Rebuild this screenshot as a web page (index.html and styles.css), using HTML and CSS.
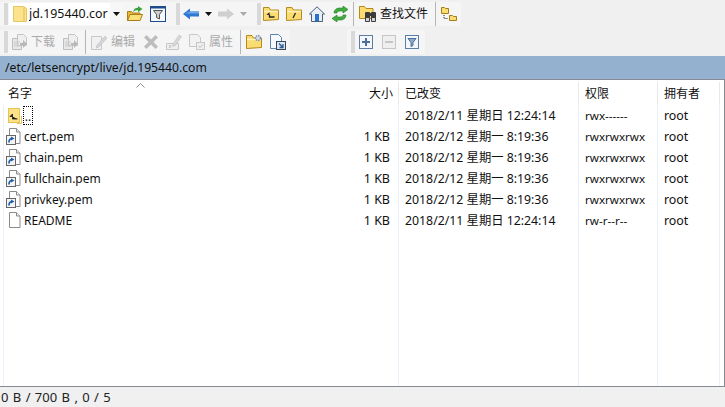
FILE: index.html
```html
<!DOCTYPE html>
<html lang="zh-CN">
<head>
<meta charset="utf-8">
<title>WinSCP</title>
<link rel="stylesheet" href="styles.css">
</head>
<body>
<svg class="defs" width="0" height="0">
  <symbol id="doc-link" viewBox="0 0 16 17">
    <path d="M3.500.5h7l3.500 3.500v11.500H3.500z" fill="#fff" stroke="#8a8a8a"/>
    <path d="M10.500.5v3.500h3.500" fill="#eee" stroke="#8a8a8a"/>
    <rect x=".5" y="7.500" width="9" height="9" fill="#f4f4f4" stroke="#666"/>
    <path d="M3 14.500c0-3 1-4 3-4" fill="none" stroke="#1f5fa8" stroke-width="1.700"/>
    <path d="M5 8.500l3.500 2-3.500 2z" fill="#1f5fa8"/>
  </symbol>
  <symbol id="doc-dl" viewBox="0 0 16 16">
    <path d="M1.500 4.500h9v11h-9z" fill="#e8e8e8" stroke="#bdbdbd"/>
    <path d="M6.500.5h6l3 3v8h-9z" fill="#efefef" stroke="#c4c4c4"/>
    <path d="M3 8h6M3 10h5M3 12h6" stroke="#c9c9c9"/>
    <path d="M9 9h3V6l4 4-4 4v-3H9z" fill="#b8b8b8"/>
  </symbol>
  <symbol id="folder" viewBox="0 0 16 16">
    <path d="M.5 14.500v-13h5.500l1.500 2.500h8v9.500z" fill="#fbdc72" stroke="#b48a1c"/>
    <path d="M1 5.500h14" stroke="#fff3b8" stroke-width="1.500"/>
  </symbol>
  <symbol id="grip" viewBox="0 0 4 22">
    <path d="M0 1h4M0 3h4M0 5h4M0 7h4M0 9h4M0 11h4M0 13h4M0 15h4M0 17h4M0 19h4M0 21h4" stroke="#bcbcbc"/>
  </symbol>
</svg>

<header class="toolbars">
  <div class="bar">
    <div class="group g-a">
      <svg class="grip"><use href="#grip"/></svg>
      <div class="combo">
        <svg class="ic14" viewBox="0 0 14 16"><path d="M.5.5h10l3 2v13H.5z" fill="#fce28d" stroke="#e6c766"/><path d="M11 1v14" stroke="#e8bd4b"/></svg>
        <span class="combo-text">jd.195440.cor</span>
        <span class="caret-box"><i class="caret"></i></span>
      </div>
      <svg class="ic ml4" viewBox="0 0 16 16"><path d="M.5 14.500v-9h4l1 1.500h7.500v7.500z" fill="#e9b93a" stroke="#a97f15"/><path d="M.5 14.500l2.500-6h12.500l-2.500 6z" fill="#fde07a" stroke="#a97f15"/><path d="M6 6c.5-3 3-4.500 5-4.200V0l4.500 3L11 6.200V4.300C9 4 7.500 4.700 6 6z" fill="#3ba33b"/></svg>
      <svg class="ic ml7" viewBox="0 0 16 16"><rect x=".5" y=".5" width="15" height="15" fill="#f4f7fb" stroke="#1c4a8a"/><path d="M1 1.500h14" stroke="#1c4a8a" stroke-width="2"/><path d="M3.500 4.500h9L9.500 8.500v4.500l-3-1.500v-3z" fill="#cfcfcf" stroke="#555"/></svg>
    </div>
    <div class="group g-b">
      <svg class="grip"><use href="#grip"/></svg>
      <svg class="ic ml3" viewBox="0 0 16 16"><path d="M0 8l7-5.500V5.500h9v5H7v3z" fill="#2f76d2"/><path d="M7 5.500h9v2H2z" fill="#6fa6e8"/></svg>
      <i class="caret ml6"></i>
      <svg class="ic ml6" viewBox="0 0 16 16"><path d="M16 8L9 2.500V5.500H0v5h9v3z" fill="#cfcfcf"/></svg>
      <i class="caret caret-off ml6"></i>
    </div>
    <div class="group g-c">
      <svg class="grip"><use href="#grip"/></svg>
      <svg class="ic ml2" viewBox="0 0 16 16"><use href="#folder"/><path d="M6.500 8.500v2.500h5" fill="none" stroke="#222" stroke-width="1.300"/><path d="M3.500 9l3-3v3z" fill="#222"/></svg>
      <svg class="ic ml7" viewBox="0 0 16 16"><use href="#folder"/><path d="M9.500 7l-2.500 5" stroke="#222" stroke-width="1.300"/></svg>
      <svg class="ic ml7" viewBox="0 0 16 16"><path d="M8 .8L.5 8h2v7.500h11V8h2z" fill="#e9eef5" stroke="#4a617e"/><rect x="6" y="8" width="4" height="7" fill="#2a73cc"/></svg>
      <svg class="ic ml7" viewBox="0 0 16 16"><path d="M2 7c0-3 2.500-5 5.500-5H11V0l5 3.500L11 7V5H8C6 5 5 6 5 7z" fill="#3fae3f" stroke="#237a23" stroke-width=".6"/><path d="M14 9c0 3-2.500 5-5.500 5H5v2l-5-3.500L5 9v2h3c2 0 3-1 3-2z" fill="#3fae3f" stroke="#237a23" stroke-width=".6"/></svg>
      <i class="sep"></i>
      <div class="find">
        <svg class="ic-find" viewBox="0 0 18 18"><path d="M.5 13.500v-12h5l1.500 2h7v10z" fill="#fbdc72" stroke="#b48a1c"/><rect x="6" y="7" width="5" height="10" rx="1" fill="#3b3b3b"/><rect x="12" y="7" width="5" height="10" rx="1" fill="#3b3b3b"/><rect x="10" y="8" width="3" height="3" fill="#3b3b3b"/><rect x="7" y="13" width="3" height="3" fill="#cfd6df"/><rect x="13" y="13" width="3" height="3" fill="#cfd6df"/></svg>
        <span class="find-text">查找文件</span>
      </div>
      <i class="sep"></i>
      <svg class="ic" viewBox="0 0 16 16"><path d="M.5 7.500v-6h3l1 1h3v5z" fill="#fbdc72" stroke="#a27d18"/><path d="M8.500 14.500v-5h3l1 1h3v4z" fill="#fbdc72" stroke="#a27d18"/><path d="M3 9v3.500h4" fill="none" stroke="#222" stroke-dasharray="1 1"/></svg>
    </div>
  </div>

  <div class="bar">
    <div class="group g-d">
      <svg class="grip"><use href="#grip"/></svg>
      <svg class="ic ml3"><use href="#doc-dl"/></svg>
      <span class="label-off ml4">下载</span>
      <svg class="ic ml7"><use href="#doc-dl"/></svg>
      <i class="sep sep-off"></i>
      <svg class="ic" viewBox="0 0 16 16"><path d="M.5 2.500h10v13H.5z" fill="#f1f1f1" stroke="#c8c8c8"/><path d="M6 11l8-9 2 2-8 9-3 1z" fill="#d5d5d5" stroke="#c0c0c0" stroke-width=".6"/></svg>
      <span class="label-off ml4">编辑</span>
      <svg class="ic ml8" viewBox="0 0 16 16"><path d="M1 3.500L3.500 1 8 5.500 12.500 1 15 3.500 10.500 8l4.500 4.500L12.500 15 8 10.500 3.500 15 1 12.500 5.500 8z" fill="#bdbdbd"/></svg>
      <svg class="ic ml7" viewBox="0 0 16 16"><path d="M.5 9.500h12v6H.5z" fill="#efefef" stroke="#c6c6c6"/><path d="M3 11l2 3M5 11l-2 3" stroke="#c6c6c6"/><path d="M7 10l6-9 2.500 1.500-6 9-3 1z" fill="#d8d8d8" stroke="#c0c0c0" stroke-width=".6"/></svg>
      <svg class="ic ml7" viewBox="0 0 16 16"><path d="M.5.500h8l3 3v9h-11z" fill="#f2f2f2" stroke="#c8c8c8"/><rect x="7.500" y="8.500" width="8" height="7" fill="#efefef" stroke="#c8c8c8"/><path d="M9.500 12l1.500 1.500 3-3" fill="none" stroke="#bbb"/></svg>
      <span class="label-off ml4">属性</span>
      <i class="sep sep-off"></i>
      <svg class="ic" viewBox="0 0 16 16"><use href="#folder"/><circle cx="12" cy="4" r="2.500" fill="#d4dce8" stroke="#7f93ad" stroke-width="1.500" stroke-dasharray="1.500 .8"/></svg>
      <svg class="ic ml8" viewBox="0 0 16 16"><path d="M.5.500h8l3 3v11h-11z" fill="#f7fafd" stroke="#5f84ad"/><rect x="6.500" y="7.500" width="9" height="8" fill="#dfe6ee" stroke="#33475f"/><path d="M9 9.500l4 4M13 10v3.500H9.500" fill="none" stroke="#2a5a96" stroke-width="1.300"/></svg>
    </div>
    <div class="group g-e">
      <svg class="grip"><use href="#grip"/></svg>
      <svg class="ic-sm ml4" viewBox="0 0 14 14"><rect x=".5" y=".5" width="13" height="13" fill="#f4f6f9" stroke="#5b7ea6"/><path d="M7 3v8M3 7h8" stroke="#4a6f9a" stroke-width="2"/></svg>
      <svg class="ic-sm ml9" viewBox="0 0 14 14"><rect x=".5" y=".5" width="13" height="13" fill="#efefef" stroke="#c6c6c6"/><path d="M3 7h8" stroke="#c6c6c6" stroke-width="2"/></svg>
      <svg class="ic-sm ml9" viewBox="0 0 14 14"><rect x=".5" y=".5" width="13" height="13" fill="#f4f6f9" stroke="#5b7ea6"/><path d="M3 3.500h8L8 7.500v3L6 11.500v-4z" fill="#8fa8c6" stroke="#4a6f9a"/></svg>
    </div>
  </div>
</header>

<div class="path">/etc/letsencrypt/live/jd.195440.com</div>

<main class="list">
  <div class="row head">
    <span class="c-name">名字</span><span class="c-size">大小</span><span class="c-date">已改变</span><span class="c-perm">权限</span><span class="c-owner">拥有者</span>
    <svg class="sort" viewBox="0 0 9 5"><path d="M.5 4.500L4.500.5l4 4" fill="none" stroke="#8a8a8a"/></svg>
  </div>
  <div class="rows">
    <div class="row">
      <span class="c-name"><svg class="fi up" viewBox="0 0 14 16"><rect x=".5" y=".5" width="11" height="14" fill="#fde28a" stroke="#e8c254"/><path d="M13.500 8v7.500H9" fill="none" stroke="#e8c254"/><path d="M2 8.500l2.500-2.500v2.500zM4.500 8.500v2.500h5" fill="#222" stroke="#222" stroke-width=".9"/></svg><span class="focus">..</span></span>
      <span class="c-size"></span><span class="c-date">2018/2/11 星期日 12:24:14</span><span class="c-perm">rwx------</span><span class="c-owner">root</span>
    </div>
    <div class="row">
      <span class="c-name"><svg class="fi"><use href="#doc-link"/></svg>cert.pem</span>
      <span class="c-size">1 KB</span><span class="c-date">2018/2/12 星期一 8:19:36</span><span class="c-perm">rwxrwxrwx</span><span class="c-owner">root</span>
    </div>
    <div class="row">
      <span class="c-name"><svg class="fi"><use href="#doc-link"/></svg>chain.pem</span>
      <span class="c-size">1 KB</span><span class="c-date">2018/2/12 星期一 8:19:36</span><span class="c-perm">rwxrwxrwx</span><span class="c-owner">root</span>
    </div>
    <div class="row">
      <span class="c-name"><svg class="fi"><use href="#doc-link"/></svg>fullchain.pem</span>
      <span class="c-size">1 KB</span><span class="c-date">2018/2/12 星期一 8:19:36</span><span class="c-perm">rwxrwxrwx</span><span class="c-owner">root</span>
    </div>
    <div class="row">
      <span class="c-name"><svg class="fi"><use href="#doc-link"/></svg>privkey.pem</span>
      <span class="c-size">1 KB</span><span class="c-date">2018/2/12 星期一 8:19:36</span><span class="c-perm">rwxrwxrwx</span><span class="c-owner">root</span>
    </div>
    <div class="row">
      <span class="c-name"><svg class="fi" viewBox="0 0 16 17"><path d="M3.500.5h7l3.500 3.500v11.500H3.500z" fill="#fff" stroke="#8a8a8a"/><path d="M10.500.5v3.500h3.500" fill="#eee" stroke="#8a8a8a"/></svg>README</span>
      <span class="c-size">1 KB</span><span class="c-date">2018/2/11 星期日 12:24:14</span><span class="c-perm">rw-r--r--</span><span class="c-owner">root</span>
    </div>
    <div class="row fill">
      <span class="c-name"></span><span class="c-size"></span><span class="c-date"></span><span class="c-perm"></span><span class="c-owner"></span>
    </div>
  </div>
</main>

<footer class="status">0 B / 700 B ,&nbsp;0 / 5</footer>
</body>
</html>
```

FILE: styles.css
```css
* { box-sizing: border-box; }
html, body { margin: 0; height: 100%; }
body {
  width: 725px;
  height: 407px;
  overflow: hidden;
  background: #f0f0f0;
  color: #111;
  font: 12px/16px "Noto Sans", "Noto Sans CJK SC", sans-serif;
  display: flex;
  flex-direction: column;
}
.defs { position: absolute; }
.toolbars { height: 56px; flex: none; }
.bar { height: 28px; display: flex; align-items: center; }
.group { height: 24px; display: flex; align-items: center; background: #f5f5f5; }
.g-a { padding: 0 6px 0 4px; }
.g-b { padding: 0 5px 0 4px; }
.g-c { padding: 0 4px 0 5px; }
.g-d { padding: 0 4px; }
.g-e { padding: 0 6px 0 4px; margin-left: 57px; }
.grip { width: 4px; height: 22px; flex: none; }
.ic { width: 16px; height: 16px; flex: none; }
.ic-sm { width: 14px; height: 14px; flex: none; }
.ic14 { width: 14px; height: 16px; flex: none; }
.ic-find { width: 18px; height: 18px; flex: none; }
.ml2 { margin-left: 2px; }
.ml3 { margin-left: 3px; }
.ml4 { margin-left: 4px; }
.ml6 { margin-left: 6px; }
.ml7 { margin-left: 7px; }
.ml8 { margin-left: 8px; }
.ml9 { margin-left: 9px; }
.combo {
  width: 114px;
  height: 22px;
  margin-left: 1px;
  padding-left: 4px;
  background: #fff;
  display: flex;
  align-items: center;
}
.combo-text { margin-left: 2px; width: 81px; font-size: 12.4px; overflow: hidden; white-space: nowrap; }
.caret-box { width: 13px; height: 22px; display: flex; align-items: center; justify-content: center; background: #f7f7f7; }
.caret { width: 7px; height: 4px; flex: none; display: block; background: #111; clip-path: polygon(0 0, 100% 0, 50% 100%); }
.caret-off { background: #aaa; }
.sep { width: 1px; height: 24px; margin: 0 5px; background: #b5b5b5; flex: none; }
.sep-off { margin: 0 5px 0 7px; }
.find { display: flex; align-items: center; }
.find-text { margin-left: 3px; margin-right: 1px; width: 49px; white-space: nowrap; }
.label-off { color: #aaa; width: 24px; white-space: nowrap; }
.path {
  height: 23px;
  flex: none;
  padding-left: 5px;
  background: #95b1d0;
  font-size: 12.2px;
  line-height: 23px;
  white-space: nowrap;
}
.list {
  flex: 1;
  background: #fff;
  border-top: 1px solid #868b92;
  border-bottom: 1px solid #868b92;
  border-right: 1px solid #868b92;
  display: flex;
  flex-direction: column;
}
.row {
  height: 21px;
  flex: none;
  display: grid;
  grid-template-columns: 346px 53px 180px 79px 62px;
  line-height: 21px;
  white-space: nowrap;
}
.row > span { padding-left: 6px; border-right: 1px solid #e8f0fa; }
.row > .c-name { border-right: 0; padding-left: 2px; display: flex; align-items: center; }
.row > .c-size { padding: 0 8px 0 0; text-align: right; font-size: 12.5px; }
.row > .c-date { font-size: 12.3px; }
.row > .c-perm { font-size: 11.6px; }
.row > .c-owner { font-size: 12.4px; }
.head { height: 25px; line-height: 23px; position: relative; padding-top: 2px; }
.head > span { border-right-color: #e8e8e8; font-size: 12px; }
.head.row > .c-name { padding-left: 8px; }
.head.row > .c-size { padding-right: 5px; font-size: 12px; }
.head.row > .c-date { font-size: 12px; }
.head.row > .c-perm { font-size: 12px; }
.head.row > .c-owner { font-size: 12px; }
.sort { position: absolute; left: 136px; top: 3px; width: 9px; height: 5px; }
.rows { flex: 1; display: flex; flex-direction: column; border-left: 1px solid #e8f0fa; margin-left: 3px; }
.rows .row { grid-template-columns: 342px 53px 180px 79px 62px; }
.rows .fill { flex: 1; height: auto; }
.fi { width: 16px; height: 17px; margin-right: 2px; flex: none; }
.fi.up { width: 14px; height: 16px; margin: 0 0 0 2px; }
.focus { outline: 1px dotted #000; outline-offset: -1px; height: 19px; width: 10px; line-height: 21px; margin-left: 1px; text-align: center; }
.status { height: 20px; flex: none; padding-left: 1px; line-height: 21px; color: #222; font-size: 13px; word-spacing: 1px; }
```
